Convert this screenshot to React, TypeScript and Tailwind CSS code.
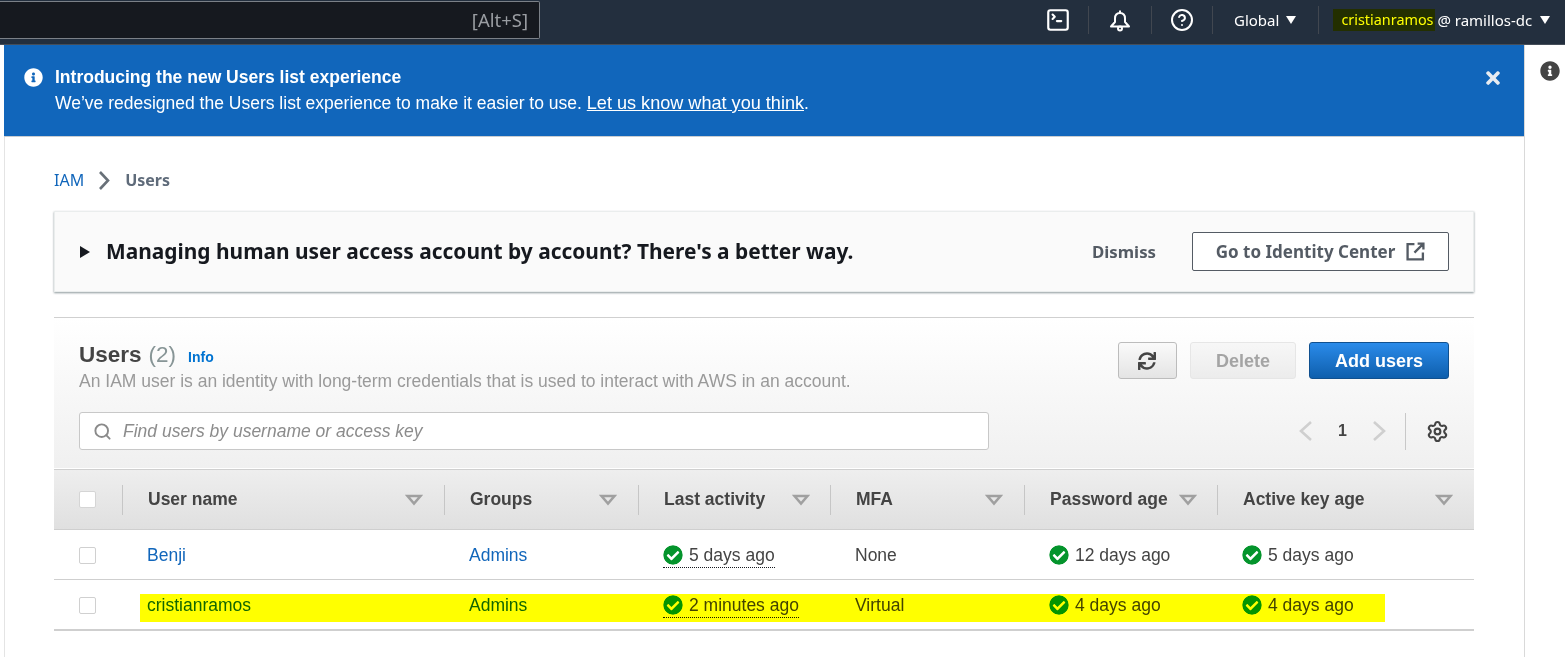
import { CircleHelp, Search, Settings, SquareTerminal } from 'lucide-react';
import { FaCheckCircle, FaInfoCircle, FaSync, FaTimes } from 'react-icons/fa';

const EMBER = 'font-["Noto_Sans","Open_Sans",sans-serif]';
const ARIAL = 'font-["Liberation_Sans",Arial,sans-serif]';

function Caret() {
  return <span className="block w-0 h-0 border-x-[5px] border-x-transparent border-t-[8px] border-t-white" />;
}

function BarDivider() {
  return <span className="block w-px h-[28px] bg-[#414750]" />;
}

function BellIcon() {
  return (
    <svg width="24" height="24" viewBox="0 0 24 24" fill="none" stroke="white" strokeWidth="2" strokeLinejoin="round" className="shrink-0">
      <path d="M12 2.5V5" />
      <path d="M12 5C8.5 5 7 7.6 7 10.5V14L3 18.5H21L17 14V10.5C17 7.6 15.5 5 12 5Z" />
      <circle cx="12" cy="20.5" r="2" />
    </svg>
  );
}

function SortIcon() {
  return (
    <svg width="18" height="12" viewBox="0 0 18 12" className="shrink-0">
      <path d="M2.5 2h13L9 9.5z" fill="none" stroke="#a0a0a0" strokeWidth="2.6" />
    </svg>
  );
}

function Chevron({ left, color, w, h }: { left?: boolean; color: string; w: number; h: number }) {
  return (
    <svg width={w} height={h} viewBox={`0 0 ${w} ${h}`} fill="none" stroke={color} strokeWidth="2.6" className="shrink-0">
      {left ? (
        <path d={`M${w - 1} 1L2 ${h / 2}L${w - 1} ${h - 1}`} />
      ) : (
        <path d={`M1 1L${w - 2} ${h / 2}L1 ${h - 1}`} />
      )}
    </svg>
  );
}

function Status({ text, dotted }: { text: string; dotted?: boolean }) {
  return (
    <span
      className={`flex items-center gap-[6px] h-[26px] ${dotted ? 'pt-px border-b border-dotted border-[#16191f]' : ''}`}
    >
      <FaCheckCircle className="text-[#04942c] bg-white rounded-full shrink-0" size={20} />
      <span>{text}</span>
    </span>
  );
}

function HeaderCell({ label, sortPad }: { label: string; sortPad: string }) {
  return (
    <div className={`flex items-center justify-between border-l border-[#c6c6c6] h-[30px] pl-[25px] ${sortPad}`}>
      <span className="text-[#444] font-bold">{label}</span>
      <SortIcon />
    </div>
  );
}

const columns = 'grid grid-cols-[68px_322px_194px_192px_194px_193px_257px] items-center';

function Checkbox({ header }: { header?: boolean }) {
  return (
    <div className="pl-[25px]">
      <div className={`w-[17px] h-[17px] bg-white border rounded-[2px] ${header ? 'border-[#d5d5d5]' : 'border-[#d0d0d0]'}`} />
    </div>
  );
}

function Row({ name, mfa, activity, password, access, highlight }: {
  name: string;
  mfa: string;
  activity: string;
  password: string;
  access: string;
  highlight?: boolean;
}) {
  return (
    <div className={`relative pt-px ${columns} text-[#444] border-[#cfcfcf] ${highlight ? 'h-[51px] border-b-2' : 'h-[50px] border-b'}`}>
      <Checkbox />
      <a className="pl-[25px] text-[#1166bb]">{name}</a>
      <a className="pl-[25px] text-[#1166bb]">Admins</a>
      <div className="pl-[25px] flex"><Status text={activity} dotted /></div>
      <div className="pl-[25px]">{mfa}</div>
      <div className="pl-[25px] flex"><Status text={password} /></div>
      <div className="pl-[25px] flex"><Status text={access} /></div>
      {highlight && (
        <div className="absolute left-[86px] top-[14px] w-[1245px] h-[28px] bg-[#ffff00] mix-blend-multiply" />
      )}
    </div>
  );
}

export default function App() {
  return (
    <div className={`w-[1565px] h-[657px] overflow-hidden bg-white flex flex-col ${ARIAL}`}>
      <header className={`h-[45px] shrink-0 bg-[#232f3e] border-b border-[#454e59] flex items-start text-white ${EMBER}`}>
        <div className="w-[540px] h-[38px] mt-px bg-[#16191f] border border-[#7b8087] border-l-0 rounded-r-[2px] flex items-center justify-end pr-[11px] text-[#9a9da2] text-[18.5px] whitespace-nowrap">
          [Alt+S]
        </div>
        <div className="ml-[505px] h-[40px] flex items-center">
          <SquareTerminal size={26} strokeWidth={2} className="shrink-0" />
          <span className="ml-[17px]"><BarDivider /></span>
          <span className="ml-[19px]"><BellIcon /></span>
          <span className="ml-[19px]"><BarDivider /></span>
          <CircleHelp size={24} strokeWidth={2} className="ml-[18px] shrink-0" />
          <span className="ml-[18px]"><BarDivider /></span>
          <span className="ml-[21px] text-[15px] whitespace-nowrap">Global</span>
          <span className="ml-[7px]"><Caret /></span>
          <span className="ml-[22px]"><BarDivider /></span>
          <span className="relative ml-[14px] h-[22px] w-[102px] flex items-center pl-[8px] text-[14.4px] whitespace-nowrap shrink-0">
            cristianramos
            <span className="absolute inset-0 bg-[#ffff00] mix-blend-multiply" />
          </span>
          <span className="ml-[2px] text-[15px] whitespace-nowrap">@ ramillos-dc</span>
          <span className="ml-[8px]"><Caret /></span>
        </div>
      </header>

      <div className="flex flex-1 min-h-0">
        <div className="w-[4px] shrink-0" />
        <main className="w-[1520px] shrink-0">
          <div className="h-[92px] bg-[#1166bb] border-b border-[#c9cdd1] flex items-start pl-[20px] pr-[21px] pt-[19px] text-white">
            <FaInfoCircle size={19} className="mt-[4px] shrink-0" />
            <div className="ml-[12px] flex-1 text-[17.5px] leading-[26px]">
              <div className="font-bold">Introducing the new Users list experience</div>
              <div>
                We’ve redesigned the Users list experience to make it easier to use.{' '}
                <a className="underline text-[18.1px]">Let us know what you think</a>.
              </div>
            </div>
            <FaTimes size={20} className="mt-[4px] text-[#e8ecf1] shrink-0" />
          </div>

          <div className="border-l border-[#e4e4e4] pl-[49px] pr-[50px] h-[521px]">
            <nav className={`h-[74px] pt-[12px] flex items-center text-[16px] ${EMBER}`}>
              <a className="text-[#1166bb]">IAM</a>
              <span className="ml-[15px]"><Chevron color="#687078" w={11} h={19} /></span>
              <span className="ml-[15px] text-[#5f6b7a] font-bold">Users</span>
            </nav>

            <section className={`h-[81px] bg-[#fafafa] border border-[#eaeded] shadow-[0_1px_2px_rgba(0,28,36,0.45)] flex items-center pl-[25px] pr-[24px] ${EMBER}`}>
              <span className="w-0 h-0 border-y-[6px] border-y-transparent border-l-[10px] border-l-[#16191f]" />
              <h2 className="ml-[16px] text-[20.9px] font-bold text-[#16191f] whitespace-nowrap">
                Managing human user access account by account? There's a better way.
              </h2>
              <button className="ml-auto text-[#545b64] text-[16.8px] font-bold">Dismiss</button>
              <button className="ml-[36px] w-[257px] h-[39px] bg-white border border-[#545b64] rounded-[2px] flex items-center justify-center gap-[11px] text-[#545b64] text-[17px] font-bold whitespace-nowrap">
                Go to Identity Center
                <svg width="19" height="19" viewBox="0 0 18 18" fill="none" stroke="#545b64" strokeWidth="2.2" className="shrink-0">
                  <path d="M8 2H1.5v14.5H16V10M11 1.5h5.5V7M16.5 1.5L8 10" />
                </svg>
              </button>
            </section>

            <section className="mt-[25px] border-t border-[#d0d0d0] text-[17.5px]">
              <div className="h-[151px] bg-gradient-to-b from-white to-[#f0f0f0] px-[25px] pt-[24px] border-b border-white">
                <div className="flex justify-between items-start">
                  <div>
                    <div className="flex items-baseline leading-[26px]">
                      <h1 className="text-[22.5px] font-bold text-[#444]">Users</h1>
                      <span className="ml-[7px] text-[22.5px] text-[#879596]">(2)</span>
                      <a className="ml-[12px] text-[14px] font-bold text-[#0073d1]">Info</a>
                    </div>
                    <p className="text-[17.5px] leading-[24px] text-[#9a9a9a] -mt-px">
                      An IAM user is an identity with long-term credentials that is used to interact with AWS in an account.
                    </p>
                  </div>
                  <div className="flex items-center gap-[13px] text-[18px]">
                    <button className="w-[59px] h-[37px] pr-[2px] rounded-[3px] border border-[#bcbcbc] bg-gradient-to-b from-[#fafafa] to-[#e4e4e4] flex items-center justify-center text-[#444]">
                      <FaSync size={18} />
                    </button>
                    <button className="w-[106px] h-[37px] pt-px rounded-[3px] border border-[#e6e6e6] bg-gradient-to-b from-[#f7f7f7] to-[#ececec] text-[#a4a4a4] font-bold">
                      Delete
                    </button>
                    <button className="w-[140px] h-[37px] pt-px rounded-[3px] border border-[#10508f] bg-gradient-to-b from-[#2a8bea] to-[#0e5fad] text-white font-bold">
                      Add users
                    </button>
                  </div>
                </div>
                <div className="mt-[19px] flex items-center">
                  <div className="w-[910px] h-[38px] bg-white border border-[#c8c8c8] rounded-[3px] flex items-center pl-[13px]">
                    <Search size={19} strokeWidth={2.4} className="text-[#8a8a8a]" />
                    <span className="ml-[11px] italic text-[#8c8c8c]">Find users by username or access key</span>
                  </div>
                  <div className="ml-auto flex items-center">
                    <Chevron left color="#cfcfcf" w={13} h={20} />
                    <span className="ml-[26px] w-[9px] text-[16px] font-bold text-[#444]">1</span>
                    <span className="ml-[26px]"><Chevron color="#cfcfcf" w={13} h={20} /></span>
                    <span className="ml-[19px] w-px h-[37px] bg-[#c8c8c8]" />
                    <Settings size={23} strokeWidth={2.2} className="ml-[20px] text-[#444]" />
                  </div>
                </div>
              </div>

              <div className={`h-[61px] ${columns} bg-gradient-to-b from-[#eeeeee] to-[#e0e0e0] border-y border-[#cfcfcf]`}>
                <Checkbox header />
                <HeaderCell label="User name" sortPad="pr-[21px]" />
                <HeaderCell label="Groups" sortPad="pr-[21px]" />
                <HeaderCell label="Last activity" sortPad="pr-[20px]" />
                <HeaderCell label="MFA" sortPad="pr-[21px]" />
                <HeaderCell label="Password age" sortPad="pr-[20px]" />
                <HeaderCell label="Active key age" sortPad="pr-[21px]" />
              </div>

              <Row name="Benji" mfa="None" activity="5 days ago" password="12 days ago" access="5 days ago" />
              <Row name="cristianramos" mfa="Virtual" activity="2 minutes ago" password="4 days ago" access="4 days ago" highlight />
            </section>
          </div>
        </main>
        <aside className="flex-1 border-l border-[#d9d9d9] pl-[15px] pt-[16px]">
          <FaInfoCircle size={20} className="text-[#444]" />
        </aside>
      </div>
    </div>
  );
}
